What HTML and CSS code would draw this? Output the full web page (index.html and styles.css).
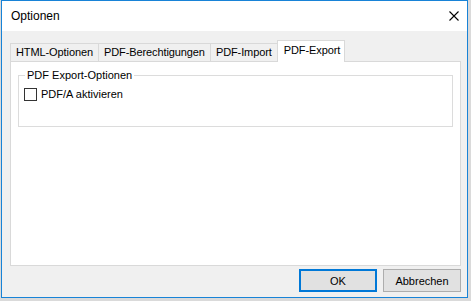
FILE: index.html
```html
<!DOCTYPE html>
<html>
<head>
<meta charset="utf-8">
<link rel="stylesheet" href="styles.css">
</head>
<body>
<div class="window">
  <div class="titlebar">
    <span class="title">Optionen</span>
    <svg class="close" width="10" height="10" viewBox="0 0 10 10"><path d="M0.5 0.5 L9.5 9.5 M9.5 0.5 L0.5 9.5" stroke="#000" stroke-width="1.1" fill="none"/></svg>
  </div>
  <div class="body">
    <div class="tabs">
      <div class="tab">HTML-Optionen</div>
      <div class="tab">PDF-Berechtigungen</div>
      <div class="tab">PDF-Import</div>
      <div class="tab active">PDF-Export</div>
    </div>
    <div class="panel">
      <fieldset class="group">
        <legend>PDF Export-Optionen</legend>
        <label class="check"><span class="box"></span>PDF/A aktivieren</label>
      </fieldset>
    </div>
    <div class="buttons">
      <button class="btn default">OK</button>
      <button class="btn">Abbrechen</button>
    </div>
  </div>
</div>
</body>
</html>
```
FILE: styles.css
```css
html, body {
  margin: 0;
  padding: 0;
}
body {
  width: 471px;
  height: 301px;
  background: #dadada;
  font-family: "Liberation Sans", Arial, sans-serif;
  font-size: 11px;
  color: #000;
  padding: 0 3px 3px 1px;
  box-sizing: border-box;
}
.window {
  width: 467px;
  height: 298px;
  box-sizing: border-box;
  border: 1px solid #1883d7;
  background: #f0f0f0;
  display: flex;
  flex-direction: column;
}
.titlebar {
  height: 30px;
  background: #fff;
  display: flex;
  align-items: center;
  justify-content: space-between;
  padding: 0 8px 0 9px;
  flex-shrink: 0;
}
.title {
  font-size: 12px;
  margin-top: -1px;
}
.close {
  display: block;
  margin-top: -1px;
}
.body {
  flex: 1;
  display: flex;
  flex-direction: column;
  padding: 10px 6px 0 8px;
}
.tabs {
  display: flex;
  height: 20px;
  align-items: flex-end;
  position: relative;
  z-index: 1;
  letter-spacing: -0.1px;
}
.tab {
  height: 18px;
  box-sizing: border-box;
  border: 1px solid #d9d9d9;
  border-bottom: none;
  border-left: none;
  background: #f0f0f0;
  padding: 0 5px 0 5px;
  line-height: 17px;
}
.tab:first-child {
  border-left: 1px solid #d9d9d9;
}
.tab.active {
  height: 22px;
  margin-bottom: -1px;
  background: #fff;
  border-left: 1px solid #d9d9d9;
  margin-left: -1px;
  padding: 0 4px 0 6px;
  line-height: 18px;
}
.panel {
  height: 205px;
  box-sizing: border-box;
  background: #fff;
  border: 1px solid #d9d9d9;
  padding: 6px 7px 0 7px;
}
.group {
  margin: 0;
  height: 59px;
  box-sizing: border-box;
  border: 1px solid #dcdcdc;
  padding: 5px 5px 0 5px;
}
.group legend {
  padding: 0 2px;
  margin-left: 1px;
  line-height: 14px;
}
.check {
  display: flex;
  align-items: center;
  gap: 4px;
  line-height: 14px;
}
.box {
  width: 13px;
  height: 13px;
  box-sizing: border-box;
  border: 1px solid #333;
  background: #fff;
}
.buttons {
  display: flex;
  justify-content: flex-end;
  gap: 6px;
  padding-top: 3px;
  padding-right: 0;
}
.btn {
  width: 78px;
  height: 23px;
  box-sizing: border-box;
  border: 1px solid #adadad;
  background: #e1e1e1;
  font-family: "Liberation Sans", Arial, sans-serif;
  font-size: 11px;
  color: #000;
  padding: 0;
  margin: 0;
}
.btn.default {
  border: 2px solid #0078d7;
}
```
